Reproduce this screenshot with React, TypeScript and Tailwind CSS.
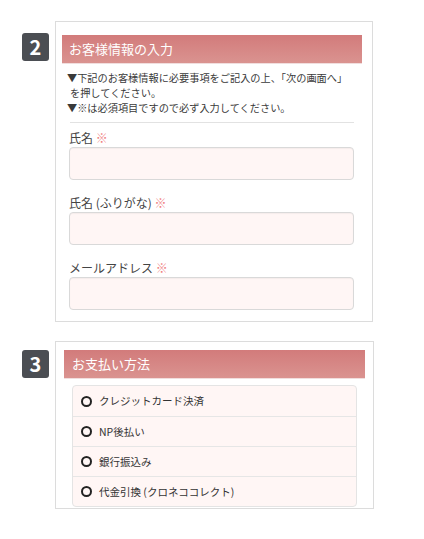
import React from "react";

const font = { fontFamily: '"Noto Sans CJK JP", "Noto Sans", sans-serif' };

const fields = ["氏名", "氏名 (ふりがな)", "メールアドレス"];
const payments = ["クレジットカード決済", "NP後払い", "銀行振込み", "代金引換 (クロネココレクト)"];

const Badge = ({ n }: { n: string }) => (
  <div className="w-[27px] h-[28px] rounded-[3px] bg-[#4b4e53] text-white flex items-center justify-center text-[20px] font-bold leading-none">
    {n}
  </div>
);

const Header = ({ title, pad }: { title: string; pad: string }) => (
  <div
    className={`h-[28px] bg-gradient-to-b from-[#d27b7b] to-[#da9390] shadow-[0_1px_0_#f1dede] flex items-center text-white text-[13px] ${pad}`}
  >
    {title}
  </div>
);

export default function App() {
  return (
    <div className="w-[424px] h-[539px] bg-white text-[#333]" style={font}>
      <div className="pt-[21px]">
        {/* section 2 */}
        <div className="flex items-start">
          <div className="w-[55px] pl-[22px] pt-[12px]">
            <Badge n="2" />
          </div>
          <div className="w-[318px] border border-[#dcdcdc] pt-[13px] pl-[6px] pr-[10px] pb-[11px]">
            <Header title="お客様情報の入力" pad="pl-[7px]" />
            <div className="pl-[5px] pt-[7px] text-[10.2px] leading-[15px] text-[#3a3a3a] whitespace-nowrap">
              <p>▼下記のお客様情報に必要事項をご記入の上、「次の画面へ」</p>
              <p className="pl-[3px]">を押してください。</p>
              <p>▼※は必須項目ですので必ず入力してください。</p>
            </div>
            <div className="ml-[8px] mr-[8px] mt-[7px] border-t border-[#e2e2e2]" />
            <div className="pl-[7px] pt-[7px]">
              {fields.map((f, i) => (
                <div key={i} className={i > 0 ? "mt-[15px]" : ""}>
                  <div className="text-[12px] leading-[16px] text-[#444]">
                    {f} <span className="text-[#f08080]">※</span>
                  </div>
                  <div className="mt-[1px] h-[33px] w-[285px] rounded-[4px] border border-[#d9d9d9] bg-[#fff6f5] shadow-[inset_0_1px_1px_rgba(0,0,0,0.04)]" />
                </div>
              ))}
            </div>
          </div>
        </div>

        {/* section 3 */}
        <div className="flex items-start mt-[19px]">
          <div className="w-[55px] pl-[22px] pt-[9px]">
            <Badge n="3" />
          </div>
          <div className="w-[319px] border border-[#dcdcdc] pt-[8px] px-[8px] pb-[1px]">
            <Header title="お支払い方法" pad="pl-[8px]" />
            <div className="mx-[8px] mt-[7px] rounded-[4px] border border-[#e4e4e4] bg-[#fff6f5]">
              {payments.map((p, i) => (
                <div
                  key={i}
                  className={`h-[30px] flex items-center pl-[8px] text-[10.5px] text-[#333] ${
                    i > 0 ? "border-t border-[#e6e6e6]" : ""
                  }`}
                >
                  <span className="w-[11px] h-[11px] rounded-full border-2 border-[#222] mr-[7px] shrink-0" />
                  {p}
                </div>
              ))}
            </div>
          </div>
        </div>
      </div>
    </div>
  );
}
